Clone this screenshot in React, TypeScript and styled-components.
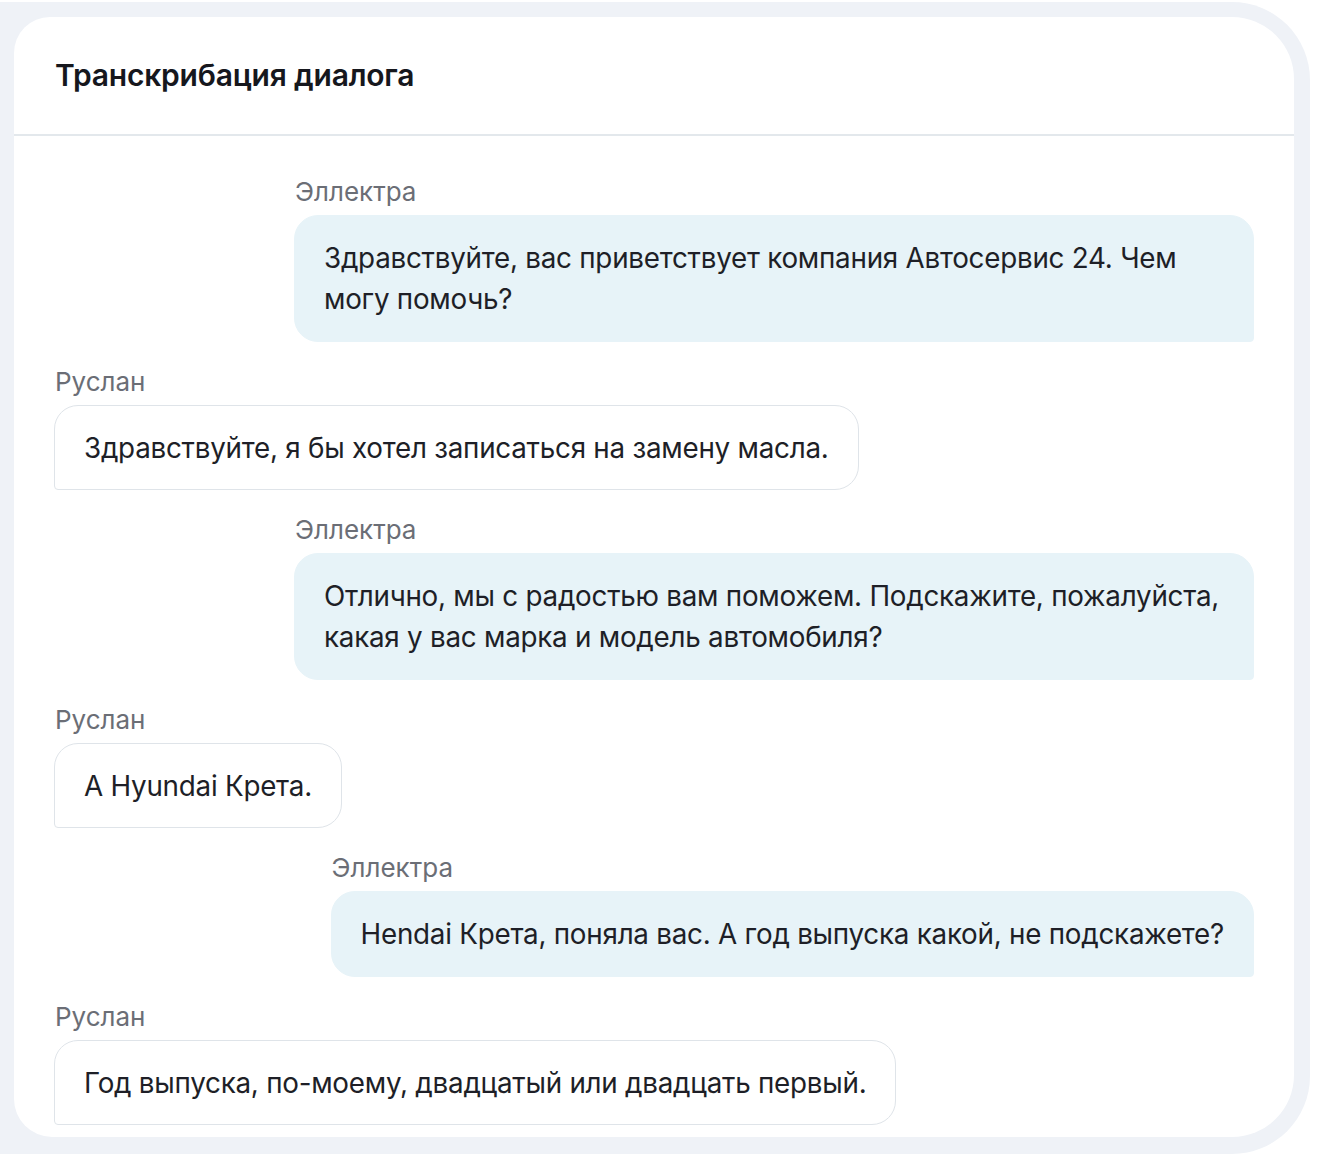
import React from "react";
import styled, { createGlobalStyle } from "styled-components";

const Global = createGlobalStyle`
  * { box-sizing: border-box; }
  html, body { margin: 0; padding: 0; background: #ffffff; }
  body { font-family: Inter, "Noto Sans", sans-serif; color: #1e1f27; }
`;

const Frame = styled.div`
  margin-top: 2px;
  width: 1310px;
  height: 1152px;
  background: #eff2f7;
  border-radius: 0 78px 78px 0;
  padding: 15px 16px 0 14px;
  overflow: hidden;
`;

const Card = styled.section`
  width: 1280px;
  height: 1120px;
  background: #ffffff;
  border-radius: 36px 62px 62px 38px;
  overflow: hidden;
  display: flex;
  flex-direction: column;
`;

const Header = styled.header`
  height: 119px;
  flex: none;
  display: flex;
  align-items: center;
  padding: 0 41px 2px;
  border-bottom: 2px solid #e3e8ec;
`;

const Title = styled.h1`
  margin: 0;
  font-size: 30px;
  font-weight: 600;
  letter-spacing: -0.2px;
  color: #16171d;
`;

const Feed = styled.div`
  display: flex;
  flex-direction: column;
  gap: 27px;
  padding: 43px 40px 13px 40px;
`;

const Message = styled.div<{ $mine: boolean }>`
  display: flex;
  flex-direction: column;
  align-items: flex-start;
  gap: 10px;
  max-width: 960px;
  align-self: ${(p) => (p.$mine ? "flex-end" : "flex-start")};
`;

const Author = styled.div`
  font-size: 26px;
  line-height: 26px;
  color: #6b6e76;
  padding-left: 1px;
`;

const Bubble = styled.div<{ $mine: boolean }>`
  font-size: 27.8px;
  line-height: 41px;
  letter-spacing: -0.25px;
  padding: 22px 29px ${(p) => (p.$mine ? "21px" : "20px")};
  color: #1e1f27;
  background: ${(p) => (p.$mine ? "#e7f3f8" : "#ffffff")};
  border: 1px solid ${(p) => (p.$mine ? "#e7f3f8" : "#dfe4e9")};
  border-radius: ${(p) => (p.$mine ? "24px 24px 4px 24px" : "24px 24px 24px 4px")};
`;

const messages = [
  { who: "Эллектра", mine: true, text: "Здравствуйте, вас приветствует компания Автосервис 24. Чем могу помочь?" },
  { who: "Руслан", mine: false, text: "Здравствуйте, я бы хотел записаться на замену масла." },
  { who: "Эллектра", mine: true, text: "Отлично, мы с радостью вам поможем. Подскажите, пожалуйста, какая у вас марка и модель автомобиля?" },
  { who: "Руслан", mine: false, text: "А Hyundai Крета." },
  { who: "Эллектра", mine: true, text: "Hendai Крета, поняла вас. А год выпуска какой, не подскажете?" },
  { who: "Руслан", mine: false, text: "Год выпуска, по-моему, двадцатый или двадцать первый." },
];

export default function App() {
  return (
    <>
      <Global />
      <Frame>
        <Card>
          <Header>
            <Title>Транскрибация диалога</Title>
          </Header>
          <Feed>
            {messages.map((m, i) => (
              <Message key={i} $mine={m.mine}>
                <Author>{m.who}</Author>
                <Bubble $mine={m.mine}>{m.text}</Bubble>
              </Message>
            ))}
          </Feed>
        </Card>
      </Frame>
    </>
  );
}
